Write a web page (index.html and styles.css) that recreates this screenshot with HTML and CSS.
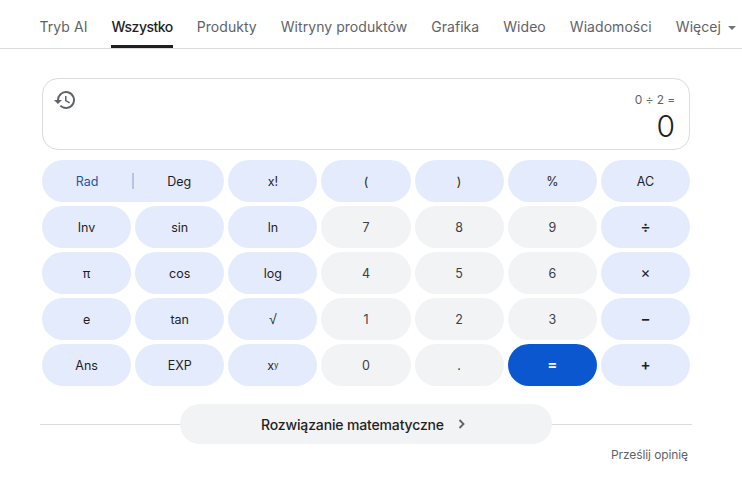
FILE: index.html
```html
<!DOCTYPE html>
<html lang="pl">
<head>
<meta charset="utf-8">
<title>Kalkulator</title>
<link rel="stylesheet" href="styles.css">
</head>
<body>
<nav class="tabs">
  <a class="tab">Tryb AI</a>
  <a class="tab active">Wszystko</a>
  <a class="tab">Produkty</a>
  <a class="tab">Witryny produktów</a>
  <a class="tab">Grafika</a>
  <a class="tab">Wideo</a>
  <a class="tab">Wiadomości</a>
  <a class="tab more">Więcej <svg class="caret" width="8" height="4" viewBox="0 0 8 4"><path d="M0 0h8L4 4z"/></svg></a>
</nav>
<main class="calc">
  <section class="display">
    <svg class="history" width="24" height="24" viewBox="0 0 24 24"><path d="M13 3a9 9 0 0 0-9 9H1l3.89 3.89.07.14L9 12H6a7 7 0 1 1 2.05 4.95l-1.42 1.42A9 9 0 1 0 13 3zm-1 5v5l4.28 2.54.72-1.21-3.5-2.08V8z"/></svg>
    <div class="readout">
      <div class="memo">0 ÷ 2 =</div>
      <div class="result">0</div>
    </div>
  </section>
  <section class="keys">
    <div class="key fn wide"><span class="rad">Rad</span><i class="sep"></i><span class="deg">Deg</span></div>
    <div class="key fn">x!</div>
    <div class="key fn">(</div>
    <div class="key fn">)</div>
    <div class="key fn">%</div>
    <div class="key fn">AC</div>
    <div class="key fn">Inv</div>
    <div class="key fn">sin</div>
    <div class="key fn">ln</div>
    <div class="key num">7</div>
    <div class="key num">8</div>
    <div class="key num">9</div>
    <div class="key fn op">÷</div>
    <div class="key fn">π</div>
    <div class="key fn">cos</div>
    <div class="key fn">log</div>
    <div class="key num">4</div>
    <div class="key num">5</div>
    <div class="key num">6</div>
    <div class="key fn op times">×</div>
    <div class="key fn">e</div>
    <div class="key fn">tan</div>
    <div class="key fn root">√</div>
    <div class="key num">1</div>
    <div class="key num">2</div>
    <div class="key num">3</div>
    <div class="key fn op">−</div>
    <div class="key fn">Ans</div>
    <div class="key fn">EXP</div>
    <div class="key fn">x<sup>y</sup></div>
    <div class="key num">0</div>
    <div class="key num">.</div>
    <div class="key eq">=</div>
    <div class="key fn op">+</div>
  </section>
  <div class="solver">
    <div class="solver-btn">Rozwiązanie matematyczne
      <svg class="chev" width="8" height="12" viewBox="0 0 8 12"><path d="M1.500 2 5.500 6l-4 4" fill="none" stroke="#5f6368" stroke-width="1.800"/></svg>
    </div>
  </div>
  <div class="feedback">Prześlij opinię</div>
</main>
</body>
</html>
```

FILE: styles.css
```css
* { box-sizing: border-box; }
html, body { margin: 0; padding: 0; background: #fff; }
body { width: 742px; height: 479px; overflow: hidden; font-family: Inter, "Liberation Sans", sans-serif; color: #1f1f1f; }

.tabs { display: flex; gap: 24px; height: 49px; padding-left: 39.500px; border-bottom: 1px solid #dadce0; white-space: nowrap; overflow: hidden; }
.tab { display: block; height: 48px; line-height: 54px; font-size: 14px; letter-spacing: 0.050px; color: #5f6368; }
.tab.active { color: #1f1f1f; font-weight: 500; letter-spacing: -0.500px; border-bottom: 3px solid #1f1f1f; }
.caret { fill: #70757a; vertical-align: middle; margin-left: 3px; }

.calc { padding: 29px 52px 0 42px; }
.display { display: flex; justify-content: space-between; height: 72px; border: 1px solid #dadce0; border-radius: 16px; padding: 9px 14px 0 10px; }
.history { fill: #5f6368; }
.readout { text-align: right; }
.memo { font-size: 12px; line-height: 20px; letter-spacing: -0.100px; color: #5f6368; margin: 2px 0 -2px; }
.result { font-size: 30px; font-weight: 300; line-height: 36px; color: #1f1f1f; }

.keys { display: grid; grid-template-columns: repeat(7, 1fr); grid-auto-rows: 42px; gap: 4px; margin-top: 10px; }
.key { display: flex; align-items: center; justify-content: center; border-radius: 21px; font-size: 12.500px; color: #1f1f1f; }
.fn { background: #e4ebfc; }
.num { background: #f2f3f5; color: #3c4043; }
.eq { background: #0b57d0; color: #fff; font-size: 15px; font-weight: 600; padding-bottom: 1px; }
.op { font-size: 15px; font-weight: 600; padding-bottom: 1px; }
.times { font-weight: 400; }
.root { font-family: "Liberation Sans", sans-serif; font-size: 14px; }
.wide { grid-column: span 2; }
.rad, .deg { flex: 1; text-align: center; }
.rad { color: #1a56a8; }
.sep { width: 2px; height: 16px; background: #b4c4e2; }
sup { font-size: 8px; line-height: 0; vertical-align: 4px; }

.solver { position: relative; display: flex; justify-content: center; margin: 18px -2px 0; height: 40px; background: linear-gradient(#dadce0, #dadce0) center / 100% 1px no-repeat; }
.solver-btn { display: flex; align-items: center; justify-content: center; gap: 14px; width: 372px; height: 40px; padding-right: 5px; background: #f1f3f5; border-radius: 20px; font-size: 14px; font-weight: 500; letter-spacing: -0.150px; }
.feedback { margin-top: 3px; text-align: right; padding-right: 2px; font-size: 12px; line-height: 16px; letter-spacing: -0.100px; color: #5f6368; }
```
